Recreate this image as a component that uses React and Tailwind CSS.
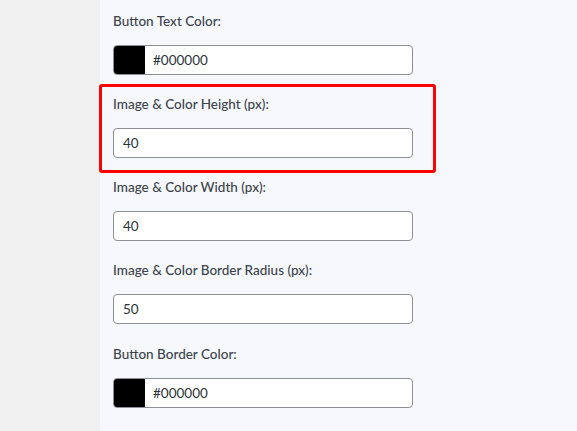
import React from "react";

const font = { fontFamily: 'Lato, "Noto Sans", sans-serif' };

const Label = ({ children }) => (
  <div className="h-[20px] text-[13.5px] leading-[20px] font-medium text-[#3c434a]">
    {children}
  </div>
);

const TextInput = ({ value }) => (
  <div className="mt-[14px] flex h-[30px] w-[300px] items-center rounded-[4px] border border-[#8c8f94] bg-white pl-[9px] text-[13.5px] text-[#2c3338]">
    {value}
  </div>
);

const ColorInput = ({ value }) => (
  <div className="mt-[14px] flex h-[30px] w-[300px] items-center overflow-hidden rounded-[4px] border border-[#8c8f94] bg-white text-[13.5px] text-[#2c3338]">
    <div className="h-full w-[31px] bg-black" />
    <span className="pl-[8px]">{value}</span>
  </div>
);

export default function App() {
  return (
    <div className="flex min-h-[431px] w-[577px]" style={font}>
      <div className="w-[100px] bg-[#f0f0f1]" />
      <div className="flex-1 bg-[#f6f8fe] pt-[11px]">
        {/* Button text color */}
        <div className="pl-[13px]">
          <Label>Button Text Color:</Label>
          <ColorInput value="#000000" />
        </div>

        {/* Highlighted field */}
        <div className="ml-[-1px] mt-[9px] w-[337px] rounded-[3px] border-[3px] border-[#f00] pb-[12px] pl-[11px] pt-[7px]">
          <Label>Image &amp; Color Height (px):</Label>
          <TextInput value="40" />
        </div>

        <div className="mt-[4px] pl-[13px]">
          <Label>Image &amp; Color Width (px):</Label>
          <TextInput value="40" />
        </div>

        <div className="mt-[19px] pl-[13px]">
          <Label>Image &amp; Color Border Radius (px):</Label>
          <TextInput value="50" />
        </div>

        <div className="mt-[20px] pl-[13px]">
          <Label>Button Border Color:</Label>
          <ColorInput value="#000000" />
        </div>
      </div>
    </div>
  );
}
